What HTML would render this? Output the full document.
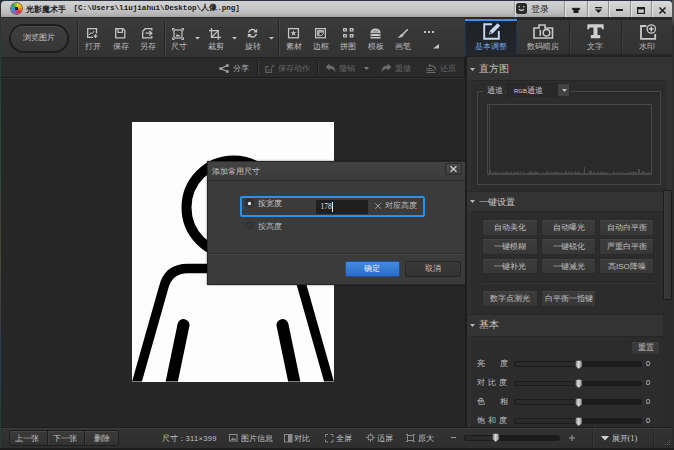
<!DOCTYPE html>
<html><head><meta charset="utf-8">
<style>
*{margin:0;padding:0;box-sizing:border-box}
html,body{width:674px;height:450px;overflow:hidden;background:#2a3440}
body{position:relative;font-family:"Liberation Sans",sans-serif}
.a{position:absolute}
.t{position:absolute;white-space:nowrap;line-height:1;font-family:"Liberation Sans",sans-serif;font-size:8px;color:#b4b4b4}
.c{text-align:center}
svg{position:absolute;overflow:visible}
.chk{background-color:#292929;background-image:linear-gradient(45deg,#242424 25%,transparent 25%,transparent 75%,#242424 75%),linear-gradient(45deg,#242424 25%,transparent 25%,transparent 75%,#242424 75%);background-size:4px 4px;background-position:0 0,2px 2px}
.sepd{position:absolute;width:1px;background:#262626;box-shadow:1px 0 0 #444}
.tb{position:absolute;top:42.4px;width:40px;text-align:center;font-size:8.4px;color:#bdbdbd;line-height:1;white-space:nowrap}
.btn{position:absolute;background:linear-gradient(#3c3c3c,#373737);border:1px solid #2a2a2a;border-radius:2px;box-shadow:inset 0 1px 0 #444;color:#c0c0c0;font-size:8px;line-height:15px;text-align:center;white-space:nowrap}
.sl{position:absolute;height:5px;border-radius:3px;background:#1c1c1c;box-shadow:inset 0 1px 1px #111,0 1px 0 #3a3a3a}
.hd{position:absolute;width:8px;height:10px;border-radius:2px 2px 4px 4px;background:linear-gradient(90deg,#8a8a8a,#e8e8e8 45%,#a0a0a0);box-shadow:0 0 0 0.5px #333}
</style></head><body>
<svg style="left:0;top:0" width="0" height="0"><defs><linearGradient id="hg" x1="0" x2="1" y1="0" y2="0"><stop offset="0" stop-color="#7a7a7a"/><stop offset="0.45" stop-color="#d8d8d8"/><stop offset="1" stop-color="#8a8a8a"/></linearGradient></defs></svg>
<!-- desktop strips -->
<div class="a" style="left:0;top:0;width:2px;height:450px;background:linear-gradient(#2a3030,#2a4a34 30%,#4a4438 60%,#2a3a50 80%,#2a3a2a)"></div>
<div class="a" style="left:672px;top:0;width:2px;height:450px;background:linear-gradient(#555 0,#555 4%,#2e2e2e 6%,#2a2a2a)"></div>
<div class="a" style="left:0;top:448px;width:674px;height:2px;background:#1c1c1c"></div>

<!-- window base -->
<div class="a" style="left:1px;top:1px;width:671px;height:447px;background:#2e2e2e;border-radius:4px 4px 0 0"></div>

<!-- title bar -->
<div class="a" style="left:1px;top:1px;width:671px;height:17px;background:linear-gradient(#d2d2d2,#c6c6c6 50%,#b4b4b4 85%,#a2a2a2);border-radius:4px 4px 0 0;border-bottom:1px solid #2a2a2a"></div>
<div class="a" style="left:11px;top:3px;width:11px;height:11px;border-radius:50%;background:conic-gradient(from 20deg,#f6d21e 0deg,#f2a21c 60deg,#e23232 120deg,#a452c4 180deg,#3492e2 240deg,#2fb246 300deg,#f6d21e 360deg);box-shadow:0 0 0 0.7px #3a3a3a"></div>
<div class="a" style="left:15.3px;top:7.3px;width:2.4px;height:2.4px;border-radius:50%;background:#1a1a1a"></div>
<div class="t" style="left:26px;top:5.1px;font-size:8.4px;font-weight:bold;color:#1c1c1c">光影魔术手</div>
<div class="t" style="left:73.5px;top:5.1px;font-family:'Liberation Mono',monospace;font-size:7.6px;font-weight:bold;color:#1c1c1c">[C:\Users\liujiahui\Desktop\人像.png]</div>

<!-- login -->
<div class="a" style="left:514px;top:1px;width:1px;height:16px;background:#9c9c9c;box-shadow:1px 0 0 #e0e0e0"></div>
<div class="a" style="left:516px;top:3.3px;width:11px;height:11px;border-radius:2.5px;background:#2a2a2a"></div>
<svg style="left:516px;top:3.3px" width="11" height="11"><path d="M3 6.2 Q5.5 8.6 8 6.2" stroke="#cfcfcf" stroke-width="1.2" fill="none"/><rect x="2.6" y="3" width="1.3" height="1.3" fill="#cfcfcf"/><rect x="7.1" y="3" width="1.3" height="1.3" fill="#cfcfcf"/></svg>
<div class="t" style="left:530.5px;top:4.6px;font-size:9px;color:#222">登录</div>

<!-- window buttons -->
<div class="a" style="left:564px;top:1px;width:108px;height:16px;background:linear-gradient(#dadada,#c9c9c9 60%,#bebebe);border-radius:0 4px 0 0"></div>
<div class="a" style="left:564px;top:1px;width:1px;height:16px;background:#8e8e8e;box-shadow:1px 0 0 #e4e4e4"></div>
<div class="a" style="left:586.5px;top:1px;width:1px;height:16px;background:#8e8e8e;box-shadow:1px 0 0 #e4e4e4"></div>
<div class="a" style="left:608px;top:1px;width:1px;height:16px;background:#8e8e8e;box-shadow:1px 0 0 #e4e4e4"></div>
<div class="a" style="left:630px;top:1px;width:1px;height:16px;background:#8e8e8e;box-shadow:1px 0 0 #e4e4e4"></div>
<div class="a" style="left:651px;top:1px;width:1px;height:16px;background:#8e8e8e;box-shadow:1px 0 0 #e4e4e4"></div>
<svg style="left:571.3px;top:6.6px" width="10" height="6.5" viewBox="0 0 10 8" preserveAspectRatio="none"><path d="M0.5 2.2 L3 0.5 L4 1.4 L5 0.5 L6 1.4 L7 0.5 L9.5 2.2 L8.2 4 L7.5 3.5 L7.5 7.5 L2.5 7.5 L2.5 3.5 L1.8 4 Z" fill="#1e1e1e"/></svg>
<svg style="left:594.8px;top:6.8px" width="7" height="7"><rect x="0" y="0" width="7" height="1.3" fill="#1e1e1e"/><path d="M0 2.6 L7 2.6 L3.5 6 Z" fill="#1e1e1e"/></svg>
<div class="a" style="left:616px;top:9.2px;width:7px;height:1.6px;background:#1e1e1e"></div>
<svg style="left:637px;top:6.5px" width="8" height="7"><rect x="0.6" y="0.6" width="6.8" height="5.8" fill="none" stroke="#1e1e1e" stroke-width="1.2"/><rect x="0" y="0" width="8" height="2.4" fill="#1e1e1e"/></svg>
<svg style="left:659px;top:6.5px" width="7" height="7"><path d="M0.5 0.5 L6.5 6.5 M6.5 0.5 L0.5 6.5" stroke="#1e1e1e" stroke-width="1.6"/></svg>

<!-- toolbar -->
<div class="a" style="left:1px;top:18px;width:465px;height:40px;background:linear-gradient(#3b3b3b,#363636 50%,#333);border-bottom:1px solid #202020"></div>
<div class="a" style="left:9px;top:23.5px;width:60px;height:29px;border-radius:14.5px;background:#1d1d1d"></div>
<div class="a" style="left:11px;top:25.5px;width:56px;height:25px;border-radius:12.5px;background:linear-gradient(#3e3e3e,#363636);box-shadow:inset 0 1px 0 #4a4a4a"></div>
<div class="t c" style="left:9px;width:60px;top:34px;font-size:8px;color:#c8c8c8">浏览图片</div>
<div class="sepd" style="left:77px;top:20px;height:37px"></div>
<div class="sepd" style="left:163.5px;top:20px;height:37px"></div>
<div class="sepd" style="left:278px;top:20px;height:37px"></div>
<!-- toolbar icons -->
<svg style="left:87px;top:28px" width="11" height="10"><path d="M9.5 5.5 V0.7 H0.7 V9.3 H6" fill="none" stroke="#c4c4c4" stroke-width="1.3"/><path d="M2.2 7 L4 4.6 L5.2 5.8 L7.2 3" fill="none" stroke="#c4c4c4" stroke-width="1"/><path d="M8.5 6.2 V10 M6.6 8.1 H10.4" stroke="#c4c4c4" stroke-width="1.3"/></svg>
<svg style="left:115px;top:28px" width="10.5" height="10.5"><path d="M0.7 0.7 H8 L9.8 2.5 V9.8 H0.7 Z" fill="none" stroke="#c4c4c4" stroke-width="1.3"/><path d="M3 0.7 V4.4 H7.4 V0.7" fill="none" stroke="#c4c4c4" stroke-width="1.2"/></svg>
<svg style="left:142px;top:28px" width="11" height="10.5"><path d="M9.8 2.5 V0.7 H3.2 L0.7 3.2 V9.8 H9.8 V8" fill="none" stroke="#c4c4c4" stroke-width="1.3"/><path d="M3.5 5.2 H9.5 M7.3 3 L9.8 5.2 L7.3 7.4" fill="none" stroke="#c4c4c4" stroke-width="1.3"/></svg>
<svg style="left:172px;top:27.5px" width="12" height="12"><rect x="2" y="2" width="8" height="8" fill="none" stroke="#c4c4c4" stroke-width="1.2"/><path d="M0.5 0.5h2M0.5 0.5v2M11.5 0.5h-2M11.5 0.5v2M0.5 11.5h2M0.5 11.5v-2M11.5 11.5h-2M11.5 11.5v-2" stroke="#c4c4c4" stroke-width="1"/><path d="M3.5 8.5 L5 6 L6.2 7.3 L7 6.4 L8.5 8.5 Z" fill="#c4c4c4"/></svg>
<svg style="left:209px;top:27.5px" width="12" height="12"><path d="M2.5 0 V9.3 H12 M0 2.6 H9.3 V11.8" fill="none" stroke="#c4c4c4" stroke-width="1.3"/><path d="M2.5 9.3 L9.3 2.6" stroke="#c4c4c4" stroke-width="1.2"/></svg>
<svg style="left:246.5px;top:28px" width="11" height="10.5"><path d="M1.6 4.6 A4 4 0 0 1 8.8 3.2" fill="none" stroke="#c4c4c4" stroke-width="1.5"/><path d="M10.2 0.8 V4.6 H6.4 Z" fill="#c4c4c4"/><path d="M9.4 5.9 A4 4 0 0 1 2.2 7.3" fill="none" stroke="#c4c4c4" stroke-width="1.5"/><path d="M0.8 9.7 V5.9 H4.6 Z" fill="#c4c4c4"/></svg>
<svg style="left:288px;top:27.8px" width="11" height="10.5"><rect x="0.6" y="0.6" width="9.8" height="9.2" fill="none" stroke="#c4c4c4" stroke-width="1.3"/><path d="M5.5 2.2 L6.3 4.3 L8.4 4.3 L6.7 5.6 L7.4 7.8 L5.5 6.5 L3.6 7.8 L4.3 5.6 L2.6 4.3 L4.7 4.3 Z" fill="#c4c4c4"/></svg>
<svg style="left:314.6px;top:27.7px" width="11" height="10.5"><rect x="0.6" y="0.6" width="9.8" height="9.2" fill="none" stroke="#c4c4c4" stroke-width="1.2"/><path d="M2.6 2.6 H8.4 V5.6 L6.2 7.8 H2.6 Z" fill="none" stroke="#c4c4c4" stroke-width="1"/><path d="M3.2 3.2 H7.8 V4.4 H4.4 V7.2 H3.2 Z" fill="#c4c4c4"/></svg>
<svg style="left:342.8px;top:28.3px" width="11" height="10"><g fill="#c4c4c4"><rect x="0" y="0" width="4" height="3.6" rx="0.5"/><rect x="6.6" y="0" width="4" height="3.6" rx="0.5"/><rect x="0" y="6" width="4" height="3.6" rx="0.5"/><rect x="6.6" y="6" width="4" height="3.6" rx="0.5"/></g><g fill="#3a3a3a"><rect x="1.3" y="1.2" width="1.4" height="1.2"/><rect x="7.9" y="1.2" width="1.4" height="1.2"/><rect x="1.3" y="7.2" width="1.4" height="1.2"/><rect x="7.9" y="7.2" width="1.4" height="1.2"/></g></svg>
<svg style="left:369.8px;top:27.8px" width="11" height="10.6"><path d="M0.5 5 Q0.5 0.5 5.5 0.5 Q10.5 0.5 10.5 5 V10.4 H0.5 Z" fill="#c4c4c4"/><path d="M2.3 4.6 Q2.5 2 5.5 2 Q8.5 2 8.7 4.6 Z" fill="#9a9a9a"/><rect x="0.5" y="5.2" width="10" height="1.1" fill="#343434"/><rect x="2.5" y="6.3" width="6" height="1.3" fill="#dcdcdc"/><rect x="0.5" y="8" width="10" height="0.9" fill="#343434"/></svg>
<svg style="left:396.5px;top:28.8px" width="11" height="9"><path d="M10.3 0.8 L5.8 5.3" stroke="#c4c4c4" stroke-width="1.6" stroke-linecap="round"/><path d="M5.9 4.8 Q7.2 6.2 5.8 7.6 Q4.2 9 0.3 8.6 Q2 7.8 3 6.4 Q4.2 4.4 5.9 4.8Z" fill="#c4c4c4"/></svg>
<svg style="left:423.5px;top:30.5px" width="10" height="2"><rect x="0" y="0" width="2" height="2" fill="#c4c4c4"/><rect x="4" y="0" width="2" height="2" fill="#c4c4c4"/><rect x="8" y="0" width="2" height="2" fill="#c4c4c4"/></svg>
<svg style="left:432.5px;top:43.5px" width="6" height="4.5"><path d="M6 0 V4.5 H0 Z" fill="#c4c4c4"/></svg>
<svg style="left:195px;top:37px" width="5" height="2.5"><path d="M0 0 H5 L2.5 2.5 Z" fill="#c4c4c4"/></svg>
<svg style="left:231.8px;top:37px" width="5" height="2.5"><path d="M0 0 H5 L2.5 2.5 Z" fill="#c4c4c4"/></svg>
<svg style="left:268.8px;top:37px" width="5" height="2.5"><path d="M0 0 H5 L2.5 2.5 Z" fill="#c4c4c4"/></svg>
<!-- toolbar labels -->
<div class="tb" style="left:73px">打开</div>
<div class="tb" style="left:100.5px">保存</div>
<div class="tb" style="left:128px">另存</div>
<div class="tb" style="left:158.7px">尺寸</div>
<div class="tb" style="left:195.7px">裁剪</div>
<div class="tb" style="left:232.8px">旋转</div>
<div class="tb" style="left:273.8px">素材</div>
<div class="tb" style="left:301px">边框</div>
<div class="tb" style="left:328px">拼图</div>
<div class="tb" style="left:356px">模板</div>
<div class="tb" style="left:382.7px">画笔</div>
<!-- right tabs -->
<div class="a" style="left:465px;top:18px;width:207px;height:40px;background:#262626"></div>
<div class="a" style="left:517px;top:20px;width:155px;height:34px;background:linear-gradient(#373737,#323232)"></div>
<div class="a" style="left:568.5px;top:20px;width:1px;height:34px;background:#262626;box-shadow:1px 0 0 #3c3c3c"></div>
<div class="a" style="left:620.5px;top:20px;width:1px;height:34px;background:#262626;box-shadow:1px 0 0 #3c3c3c"></div>
<div class="a" style="left:465px;top:19px;width:52px;height:37px;background:linear-gradient(#1e2126,#23262c);border:1px solid #1f3150;border-top:none"></div>
<div class="a" style="left:465px;top:19px;width:52px;height:2px;background:#3e8ee6"></div>
<svg style="left:482.5px;top:22.5px" width="17" height="17"><path d="M9 1.2 H1.2 V15.8 H15.8 V8" fill="none" stroke="#c6d8f4" stroke-width="1.9"/><path d="M14.6 0.2 L17.2 2.8 L9.6 10.4 L5.8 11.6 L7 7.8 Z" fill="#c6d8f4"/><path d="M7.4 8.6 L6.6 10.8 L8.8 10 Z" fill="#3a4a66"/></svg>
<div class="t c" style="left:465px;width:52px;top:42.3px;font-size:8.4px;color:#72a4ea">基本调整</div>
<svg style="left:533px;top:23.5px" width="20.5" height="15"><path d="M1 4 H6 V1 H12 V4 H19.5 V14 H1 Z" fill="none" stroke="#c8c8c8" stroke-width="1.6"/><circle cx="13.5" cy="8.8" r="3.3" fill="none" stroke="#c8c8c8" stroke-width="1.5"/><rect x="6.5" y="5.8" width="1.6" height="6" fill="#c8c8c8"/></svg>
<div class="t c" style="left:517px;width:52px;top:42.3px;font-size:8.4px;color:#bcbcbc">数码暗房</div>
<svg style="left:587px;top:24px" width="17" height="14.5"><path d="M0.5 0.3 H16.5 L16.8 5.3 L15.2 5.3 L14.3 3.6 H10.5 V11 H13.2 V14.2 H3.8 V11 H6.5 V3.6 H2.7 L1.8 5.3 H0.2 Z" fill="#cfcfcf"/></svg>
<div class="t c" style="left:569px;width:52px;top:42.1px;font-size:8.4px;color:#bcbcbc">文字</div>
<svg style="left:639.5px;top:24.5px" width="17" height="15"><path d="M6.5 1 H1 V13.8 H15.2 V9" fill="none" stroke="#c8c8c8" stroke-width="1.8"/><circle cx="11.3" cy="4" r="4.2" fill="#333" stroke="#c8c8c8" stroke-width="1.3"/><path d="M11.3 1.6 V6.4 M8.9 4 H13.7" stroke="#d0d0d0" stroke-width="1.4"/></svg>
<div class="t c" style="left:621px;width:52px;top:42.1px;font-size:8.4px;color:#bcbcbc">水印</div>

<!-- secondary bar -->
<div class="a chk" style="left:1px;top:58px;width:464px;height:20px;border-bottom:1px solid #1c1c1c;border-right:1px solid #1c1c1c;box-shadow:inset 0 0 0 100px rgba(60,60,60,0.18)"></div>
<svg style="left:219px;top:63.5px" width="10" height="9"><path d="M8.2 1.5 L1.8 4.5 L8.2 7.5" fill="none" stroke="#a0a0a0" stroke-width="1.2"/><circle cx="8.3" cy="1.6" r="1.5" fill="#a0a0a0"/><circle cx="1.7" cy="4.5" r="1.5" fill="#a0a0a0"/><circle cx="8.3" cy="7.4" r="1.5" fill="#a0a0a0"/></svg>
<div class="t" style="left:233px;top:64.5px;font-size:8px;color:#b4b4b4">分享</div>
<div class="a" style="left:257px;top:61px;width:1px;height:14px;background:#1c1c1c;box-shadow:1px 0 0 #3a3a3a"></div>
<svg style="left:264.5px;top:63.5px" width="10" height="9"><path d="M6.5 3.5 V8.3 H0.7 V2.5 H4" fill="none" stroke="#5e5e5e" stroke-width="1.2"/><path d="M2.5 6 H5 M7 0.5 L9.5 3 M9.5 0.5 L7 3" stroke="#5e5e5e" stroke-width="1"/></svg>
<div class="t" style="left:277.5px;top:64.5px;font-size:8px;color:#646464">保存动作</div>
<div class="a" style="left:316.5px;top:61px;width:1px;height:14px;background:#1c1c1c;box-shadow:1px 0 0 #3a3a3a"></div>
<svg style="left:325px;top:63px" width="11" height="10"><path d="M0.5 4 L4.5 0.5 V2.6 Q10.5 2.6 10.5 9.5 Q8.5 5.6 4.5 5.8 V7.6 Z" fill="#6a6a6a"/></svg>
<div class="t" style="left:339px;top:64.5px;font-size:8px;color:#646464">撤销</div>
<svg style="left:364px;top:67px" width="5" height="3"><path d="M0 0 H5 L2.5 3 Z" fill="#7a7a7a"/></svg>
<svg style="left:381px;top:63px" width="11" height="10"><path d="M10.5 4 L6.5 0.5 V2.6 Q0.5 2.6 0.5 9.5 Q2.5 5.6 6.5 5.8 V7.6 Z" fill="#6a6a6a"/></svg>
<div class="t" style="left:395px;top:64.5px;font-size:8px;color:#646464">重做</div>
<svg style="left:426px;top:62.5px" width="10" height="11"><path d="M3 0.5 L5.5 2.5 L3 4.5 Z" fill="#6a6a6a"/><path d="M4 2.5 Q9.5 2.5 9.5 7" fill="none" stroke="#6a6a6a" stroke-width="1.2"/><path d="M0.5 5.5 H6 M0.5 7.5 H8 M0.5 9.5 H9.5" stroke="#6a6a6a" stroke-width="1.1"/></svg>
<div class="t" style="left:439.5px;top:64.5px;font-size:8px;color:#646464">还原</div>
<!-- canvas -->
<div class="a chk" style="left:1px;top:78.5px;width:464px;height:348.5px"></div>
<div class="a" style="left:132px;top:122px;width:202px;height:259.5px;background:#fdfdfd"></div>
<svg style="left:132px;top:122px" width="202" height="259.5" viewBox="132 122 202 259.5">
<defs><clipPath id="ic"><rect x="132" y="122" width="202" height="259.5"/></clipPath></defs>
<g clip-path="url(#ic)" fill="none" stroke="#000">
<circle cx="233.5" cy="207.5" r="47" stroke-width="10"/>
<path d="M136 385 L163.5 288 Q168 268.5 188 268.5 H278 Q298 268.5 302.5 288 L330 385" stroke-width="9.5" stroke-linejoin="round"/>
<path d="M183.5 325 L170 390 M282.5 325 L296 390" stroke-width="12" stroke-linecap="round"/>
</g></svg>

<!-- dialog -->
<div class="a" style="left:206.5px;top:160.5px;width:261px;height:124px;background:#3b3b3b;border:1px solid #262626;box-shadow:0 0 2px rgba(0,0,0,.5)"></div>
<div class="a" style="left:207.5px;top:161.5px;width:259px;height:19.5px;background:linear-gradient(#424242,#3c3c3c);border-bottom:1px solid #2c2c2c"></div>
<div class="t" style="left:212px;top:166.5px;font-size:8.3px;color:#c4c4c4">添加常用尺寸</div>
<div class="a" style="left:445px;top:163px;width:17px;height:12px;border-radius:2px;background:linear-gradient(#4a4a4a,#3c3c3c);border:1px solid #2a2a2a"></div>
<svg style="left:450px;top:166px" width="7" height="6"><path d="M0.5 0.3 L6.5 5.7 M6.5 0.3 L0.5 5.7" stroke="#d0d0d0" stroke-width="1.3"/></svg>
<div class="a" style="left:240px;top:196.2px;width:184.5px;height:20.4px;border:2px solid #2a90ec;border-radius:2px"></div>
<div class="a" style="left:245.2px;top:199.1px;width:9px;height:9px;border-radius:50%;background:#323232;box-shadow:inset 0 0.6px 0 #262626,0 0.6px 0 #454545"></div>
<div class="a" style="left:248.2px;top:202.1px;width:3px;height:3px;border-radius:50%;background:#e6e6e6;box-shadow:0 0 1px #fff"></div>
<div class="t" style="left:257.5px;top:199.3px;font-size:8.3px;color:#cacaca">按宽度</div>
<div class="a" style="left:315.5px;top:199.5px;width:52px;height:14.7px;background:#1f1f1f"></div>
<div class="t" style="left:320.5px;top:203px;font-size:7.4px;color:#e0e0e0;font-family:'Liberation Serif',serif">178</div>
<div class="a" style="left:332.3px;top:201.5px;width:1px;height:10px;background:#f0f0f0"></div>
<svg style="left:374.5px;top:202.5px" width="6" height="6"><path d="M0.3 0.3 L5.7 5.7 M5.7 0.3 L0.3 5.7" stroke="#9a9a9a" stroke-width="1"/></svg>
<div class="t" style="left:385px;top:201.5px;font-size:8px;color:#c0c0c0">对应高度</div>
<div class="a" style="left:245.2px;top:222.1px;width:9px;height:9px;border-radius:50%;background:#363636;box-shadow:inset 0 0.6px 0 #262626,0 0.6px 0 #454545"></div>
<div class="t" style="left:257.5px;top:222.3px;font-size:8.3px;color:#bcbcbc">按高度</div>
<div class="a" style="left:207.5px;top:252.5px;width:259px;height:1px;background:#2e2e2e;box-shadow:0 1px 0 #424242"></div>
<div class="a" style="left:345px;top:260.5px;width:54.6px;height:16.7px;border-radius:2px;background:linear-gradient(#418be0,#2b6bc8);border:1px solid #1e4e94;color:#e6eefa;font-size:8px;line-height:14.5px;text-align:center">确定</div>
<div class="a" style="left:405px;top:260.5px;width:55.5px;height:16.7px;border-radius:2px;background:linear-gradient(#393939,#333);border:1px solid #262626;color:#c0c0c0;font-size:8px;line-height:14.5px;text-align:center">取消</div>
<!-- right panel -->
<div class="a" style="left:465px;top:55.5px;width:207px;height:371.5px;background:#303030"></div>
<div class="a" style="left:464.5px;top:55.5px;width:2px;height:371.5px;background:#1e1e1e"></div>
<div class="a" style="left:466.5px;top:55px;width:205.5px;height:2px;background:#242424"></div>
<!-- header 直方图 -->
<div class="a" style="left:466.5px;top:57px;width:205.5px;height:23px;background:#333"></div>
<svg style="left:470px;top:68px" width="5" height="3"><path d="M0 0 H5 L2.5 3 Z" fill="#b8b8b8"/></svg>
<div class="t" style="left:479px;top:64.3px;font-size:10px;color:#c8c8c8">直方图</div>
<div class="a" style="left:471px;top:80px;width:196px;height:110.5px;background:#2c2c2c;border-top:1px solid #262626"></div>
<div class="a" style="left:477.3px;top:91px;width:183.7px;height:93.5px;border:1px solid #464646"></div>
<div class="a" style="left:483px;top:85px;width:22px;height:12px;background:#2c2c2c"></div>
<div class="t" style="left:486.5px;top:87px;font-size:8px;color:#c4c4c4">通道</div>
<div class="a" style="left:507px;top:82.8px;width:63.4px;height:14.5px;background:#292929;border:1px solid #262626"></div>
<div class="a" style="left:557.4px;top:82.8px;width:13px;height:14.5px;background:#424242;border:1px solid #2a2a2a"></div>
<svg style="left:561.5px;top:89px" width="5" height="3"><path d="M0 0 H5 L2.5 3 Z" fill="#c0c0c0"/></svg>
<div class="t" style="left:514px;top:86.5px;font-size:8px;color:#d0d0d0"><span style="font-size:6px">RGB</span>通道</div>
<div class="a" style="left:487.3px;top:104px;width:165px;height:71px;border:1px solid #484848;background:#2a2a2a"></div>
<svg style="left:488px;top:104px" width="164" height="70"><path d="M0 70 L0 69 L1 69 L1 66 L2 66 L2 66 L3 66 L3 69 L4 69 L4 69 L5 69 L5 68 L6 68 L6 68.5 L7 68.5 L7 67.5 L8 67.5 L8 68 L9 68 L9 69.5 L10 69.5 L10 68 L11 68 L11 69.5 L12 69.5 L12 68.5 L13 68.5 L13 69 L14 69 L14 68 L15 68 L15 69 L16 69 L16 69 L17 69 L17 67.5 L18 67.5 L18 68.5 L19 68.5 L19 68 L20 68 L20 68 L21 68 L21 68.5 L22 68.5 L22 68.5 L23 68.5 L23 67.5 L24 67.5 L24 69 L25 69 L25 69 L26 69 L26 67.5 L27 67.5 L27 69 L28 69 L28 68 L29 68 L29 68.5 L30 68.5 L30 67.5 L31 67.5 L31 69.5 L32 69.5 L32 67.5 L33 67.5 L33 69.5 L34 69.5 L34 69 L35 69 L35 68 L36 68 L36 69.5 L37 69.5 L37 69 L38 69 L38 69.5 L39 69.5 L39 69 L40 69 L40 68.5 L41 68.5 L41 68 L42 68 L42 67.5 L43 67.5 L43 68.5 L44 68.5 L44 67.5 L45 67.5 L45 68.5 L46 68.5 L46 68.5 L47 68.5 L47 67.5 L48 67.5 L48 68 L49 68 L49 68.5 L50 68.5 L50 69 L51 69 L51 69 L52 69 L52 69.5 L53 69.5 L53 69.5 L54 69.5 L54 69 L55 69 L55 68.5 L56 68.5 L56 69 L57 69 L57 69 L58 69 L58 67.5 L59 67.5 L59 68.5 L60 68.5 L60 67.5 L61 67.5 L61 69 L62 69 L62 68.5 L63 68.5 L63 68 L64 68 L64 68.5 L65 68.5 L65 68 L66 68 L66 69 L67 69 L67 68 L68 68 L68 68 L69 68 L69 68.5 L70 68.5 L70 68 L71 68 L71 69 L72 69 L72 69 L73 69 L73 67.5 L74 67.5 L74 69.5 L75 69.5 L75 69 L76 69 L76 68 L77 68 L77 67.5 L78 67.5 L78 67.5 L79 67.5 L79 69 L80 69 L80 67.5 L81 67.5 L81 69 L82 69 L82 68 L83 68 L83 68 L84 68 L84 68 L85 68 L85 69.5 L86 69.5 L86 67.5 L87 67.5 L87 67.5 L88 67.5 L88 69 L89 69 L89 67.5 L90 67.5 L90 68 L91 68 L91 69 L92 69 L92 69 L93 69 L93 69.5 L94 69.5 L94 69.5 L95 69.5 L95 68.5 L96 68.5 L96 63 L97 63 L97 68.5 L98 68.5 L98 69.5 L99 69.5 L99 69 L100 69 L100 69.5 L101 69.5 L101 67 L102 67 L102 67 L103 67 L103 67 L104 67 L104 69 L105 69 L105 68.5 L106 68.5 L106 68.5 L107 68.5 L107 69.5 L108 69.5 L108 69.5 L109 69.5 L109 68 L110 68 L110 68 L111 68 L111 69.5 L112 69.5 L112 68.5 L113 68.5 L113 67.5 L114 67.5 L114 68 L115 68 L115 69 L116 69 L116 68 L117 68 L117 69 L118 69 L118 68 L119 68 L119 69 L120 69 L120 69.5 L121 69.5 L121 69 L122 69 L122 69.5 L123 69.5 L123 69.5 L124 69.5 L124 69.5 L125 69.5 L125 68 L126 68 L126 68 L127 68 L127 69.5 L128 69.5 L128 69 L129 69 L129 68.5 L130 68.5 L130 69 L131 69 L131 68 L132 68 L132 69 L133 69 L133 69 L134 69 L134 67.5 L135 67.5 L135 69.5 L136 69.5 L136 69 L137 69 L137 69 L138 69 L138 69 L139 69 L139 69 L140 69 L140 68.5 L141 68.5 L141 68.5 L142 68.5 L142 68.5 L143 68.5 L143 68 L144 68 L144 68.5 L145 68.5 L145 67.5 L146 67.5 L146 68 L147 68 L147 67.5 L148 67.5 L148 68 L149 68 L149 69.5 L150 69.5 L150 65 L151 65 L151 65 L152 65 L152 69 L153 69 L153 68.5 L154 68.5 L154 67.5 L155 67.5 L155 67.5 L156 67.5 L156 67.5 L157 67.5 L157 69 L158 69 L158 69 L159 69 L159 68.5 L160 68.5 L160 69 L161 69 L161 68 L162 68 L162 69 L163 69 L163 68 L164 68 L164 70 Z" fill="#4a4a4a"/><path d="M1.5 70 V2" stroke="#444" stroke-width="1"/></svg>

<!-- header 一键设置 -->
<div class="a" style="left:466.5px;top:190.5px;width:197px;height:20.5px;background:#333;border-top:1px solid #282828"></div>
<svg style="left:470px;top:200px" width="5" height="3"><path d="M0 0 H5 L2.5 3 Z" fill="#b8b8b8"/></svg>
<div class="t" style="left:479px;top:196.5px;font-size:9.4px;color:#c8c8c8">一键设置</div>
<div class="a" style="left:471px;top:211px;width:192px;height:103px;background:#2c2c2c;border-top:1px solid #262626"></div>
<div class="btn" style="left:482.4px;top:218.9px;width:55.6px;height:16.7px">自动美化</div>
<div class="btn" style="left:541px;top:218.9px;width:55px;height:16.7px">自动曝光</div>
<div class="btn" style="left:599.3px;top:218.9px;width:55.1px;height:16.7px">自动白平衡</div>
<div class="btn" style="left:482.4px;top:238.2px;width:55.6px;height:16.7px">一键模糊</div>
<div class="btn" style="left:541px;top:238.2px;width:55px;height:16.7px">一键锐化</div>
<div class="btn" style="left:599.3px;top:238.2px;width:55.1px;height:16.7px">严重白平衡</div>
<div class="btn" style="left:482.4px;top:257.8px;width:55.6px;height:16.7px">一键补光</div>
<div class="btn" style="left:541px;top:257.8px;width:55px;height:16.7px">一键减光</div>
<div class="btn" style="left:599.3px;top:257.8px;width:55.1px;height:16.7px">高ISO降噪</div>
<div class="a" style="left:482px;top:282px;width:175px;height:1px;background:#262626;box-shadow:0 1px 0 #363636"></div>
<div class="btn" style="left:482.4px;top:290px;width:55.6px;height:16.7px">数字点测光</div>
<div class="btn" style="left:541px;top:290px;width:55px;height:16.7px">白平衡一指键</div>

<!-- header 基本 -->
<div class="a" style="left:466.5px;top:314px;width:197px;height:21.5px;background:#333;border-top:1px solid #282828"></div>
<svg style="left:470px;top:323.5px" width="5" height="3"><path d="M0 0 H5 L2.5 3 Z" fill="#b8b8b8"/></svg>
<div class="t" style="left:479px;top:320.3px;font-size:10px;color:#c8c8c8">基本</div>
<div class="a" style="left:471px;top:335.5px;width:192px;height:91.5px;background:#2c2c2c;border-top:1px solid #262626"></div>
<div class="btn" style="left:631px;top:341px;width:29px;height:14px;line-height:12.5px">重置</div>
<div class="t" style="left:477px;top:358.8px;font-size:8.3px;color:#c0c0c0;letter-spacing:0">亮<span style="display:inline-block;width:14.6px"></span>度</div>
<div class="t" style="left:477px;top:378px;font-size:8.3px;color:#c0c0c0;letter-spacing:3px">对比度</div>
<div class="t" style="left:477px;top:397px;font-size:8.3px;color:#c0c0c0">色<span style="display:inline-block;width:14.6px"></span>相</div>
<div class="t" style="left:477px;top:416px;font-size:8.3px;color:#c0c0c0;letter-spacing:3px">饱和度</div>
<div class="t" style="left:646px;top:360px;font-size:7.5px;color:#c8c8c8">0</div>
<div class="t" style="left:646px;top:379.3px;font-size:7.5px;color:#c8c8c8">0</div>
<div class="t" style="left:646px;top:398.3px;font-size:7.5px;color:#c8c8c8">0</div>
<div class="t" style="left:646px;top:417.2px;font-size:7.5px;color:#c8c8c8">0</div>

<div class="a" style="left:513.5px;top:361.2px;width:64.5px;height:5.6px;border-radius:3px 0 0 3px;background:#2a2a2a;border:1px solid #1c1c1c;border-right:none"></div>
<div class="a" style="left:578.0px;top:361.2px;width:64.2px;height:5.6px;border-radius:0 3px 3px 0;background:#1b1b1b"></div>
<svg style="left:574.5px;top:359.5px" width="7.5" height="9.5"><path d="M0.5 2 Q0.5 0.5 2 0.5 H5.5 Q7 0.5 7 2 V6.5 L3.75 9 L0.5 6.5 Z" fill="url(#hg)" stroke="#3a3a3a" stroke-width="0.6"/></svg>
<div class="a" style="left:513.5px;top:380.5px;width:64.5px;height:5.6px;border-radius:3px 0 0 3px;background:#2a2a2a;border:1px solid #1c1c1c;border-right:none"></div>
<div class="a" style="left:578.0px;top:380.5px;width:64.2px;height:5.6px;border-radius:0 3px 3px 0;background:#1b1b1b"></div>
<svg style="left:574.5px;top:378.8px" width="7.5" height="9.5"><path d="M0.5 2 Q0.5 0.5 2 0.5 H5.5 Q7 0.5 7 2 V6.5 L3.75 9 L0.5 6.5 Z" fill="url(#hg)" stroke="#3a3a3a" stroke-width="0.6"/></svg>
<div class="a" style="left:513.5px;top:399.4px;width:64.5px;height:5.6px;border-radius:3px 0 0 3px;background:#2a2a2a;border:1px solid #1c1c1c;border-right:none"></div>
<div class="a" style="left:578.0px;top:399.4px;width:64.2px;height:5.6px;border-radius:0 3px 3px 0;background:#1b1b1b"></div>
<svg style="left:574.5px;top:397.7px" width="7.5" height="9.5"><path d="M0.5 2 Q0.5 0.5 2 0.5 H5.5 Q7 0.5 7 2 V6.5 L3.75 9 L0.5 6.5 Z" fill="url(#hg)" stroke="#3a3a3a" stroke-width="0.6"/></svg>
<div class="a" style="left:513.5px;top:418.3px;width:64.5px;height:5.6px;border-radius:3px 0 0 3px;background:#2a2a2a;border:1px solid #1c1c1c;border-right:none"></div>
<div class="a" style="left:578.0px;top:418.3px;width:64.2px;height:5.6px;border-radius:0 3px 3px 0;background:#1b1b1b"></div>
<svg style="left:574.5px;top:416.6px" width="7.5" height="9.5"><path d="M0.5 2 Q0.5 0.5 2 0.5 H5.5 Q7 0.5 7 2 V6.5 L3.75 9 L0.5 6.5 Z" fill="url(#hg)" stroke="#3a3a3a" stroke-width="0.6"/></svg>
<!-- scrollbar -->
<div class="a" style="left:663px;top:190.5px;width:9px;height:236.5px;background:#2a2a2a"></div>
<div class="a" style="left:663.3px;top:190px;width:8.4px;height:110px;background:linear-gradient(90deg,#3a3a3a,#333);border:1px solid #1c1c1c;border-radius:1px"></div>
<!-- bottom bar -->
<div class="a" style="left:1px;top:426.5px;width:671px;height:21.5px;background:linear-gradient(#333,#2e2e2e);border-top:1px solid #1e1e1e;box-shadow:inset 0 1px 0 #3c3c3c"></div>
<div class="a" style="left:8.7px;top:430px;width:110.5px;height:16.2px;border-radius:3px;background:linear-gradient(#3a3a3a,#323232);border:1px solid #1e1e1e;box-shadow:inset 0 1px 0 #464646"></div>
<div class="a" style="left:47px;top:431px;width:1px;height:14.2px;background:#1e1e1e;box-shadow:1px 0 0 #404040"></div>
<div class="a" style="left:84.3px;top:431px;width:1px;height:14.2px;background:#1e1e1e;box-shadow:1px 0 0 #404040"></div>
<div class="t" style="left:15px;top:434.6px;font-size:8px;color:#c0c0c0">上一张</div>
<div class="t" style="left:52.5px;top:434.6px;font-size:8px;color:#c0c0c0">下一张</div>
<div class="t" style="left:93.5px;top:434.6px;font-size:8px;color:#c0c0c0">删除</div>
<div class="t" style="left:161.5px;top:434.6px;font-size:8px;color:#c0c0c0">尺寸：<span style="font-size:7.6px;letter-spacing:0.3px">311×399</span></div>
<svg style="left:229px;top:434px" width="8.5" height="7.5"><rect x="0.5" y="0.5" width="7.5" height="6.5" fill="none" stroke="#8a8a8a" stroke-width="1"/><path d="M1.5 6 L3.5 3.5 L5 5 L6 4 L7 6 Z" fill="#8a8a8a"/></svg>
<div class="t" style="left:241px;top:434.6px;font-size:8px;color:#c0c0c0">图片信息</div>
<svg style="left:284px;top:433.5px" width="8.5" height="8.5"><rect x="0.5" y="0.5" width="7.5" height="7.5" fill="none" stroke="#8a8a8a" stroke-width="1"/><rect x="4" y="0.5" width="4" height="7.5" fill="#8a8a8a"/></svg>
<div class="t" style="left:294px;top:434.6px;font-size:8px;color:#c0c0c0">对比</div>
<svg style="left:325px;top:433.5px" width="8.5" height="8.5"><path d="M0.5 3 V0.5 H3 M5.5 0.5 H8 V3 M8 5.5 V8 H5.5 M3 8 H0.5 V5.5" fill="none" stroke="#8a8a8a" stroke-width="1"/></svg>
<div class="t" style="left:335.5px;top:434.6px;font-size:8px;color:#c0c0c0">全屏</div>
<svg style="left:366px;top:433px" width="9" height="9"><path d="M4.5 0 V2.5 M4.5 6.5 V9 M0 4.5 H2.5 M6.5 4.5 H9" stroke="#8a8a8a" stroke-width="1"/><rect x="2.3" y="2.3" width="4.4" height="4.4" fill="none" stroke="#8a8a8a" stroke-width="1"/></svg>
<div class="t" style="left:376.5px;top:434.6px;font-size:8px;color:#c0c0c0">适屏</div>
<svg style="left:406px;top:434px" width="9" height="8"><path d="M0 0.5 H2 M7 0.5 H9 M0 7.5 H2 M7 7.5 H9" stroke="#8a8a8a" stroke-width="1"/><rect x="1.5" y="1.5" width="6" height="5" fill="none" stroke="#8a8a8a" stroke-width="1"/></svg>
<div class="t" style="left:417.5px;top:434.6px;font-size:8px;color:#c0c0c0">原大</div>
<div class="a" style="left:451px;top:437.3px;width:5px;height:1px;background:#9a9a9a"></div>
<div class="a" style="left:464.4px;top:435.0px;width:31.1px;height:5.6px;border-radius:3px 0 0 3px;background:#2a2a2a;border:1px solid #1c1c1c;border-right:none"></div>
<div class="a" style="left:495.5px;top:435.0px;width:64.5px;height:5.6px;border-radius:0 3px 3px 0;background:#1b1b1b"></div>
<svg style="left:492px;top:433.3px" width="7.5" height="9.5"><path d="M0.5 2 Q0.5 0.5 2 0.5 H5.5 Q7 0.5 7 2 V6.5 L3.75 9 L0.5 6.5 Z" fill="url(#hg)" stroke="#3a3a3a" stroke-width="0.6"/></svg>
<svg style="left:568.5px;top:435px" width="6" height="6"><path d="M3 0 V6 M0 3 H6" stroke="#9a9a9a" stroke-width="1"/></svg>
<div class="a" style="left:591.5px;top:429px;width:1px;height:17px;background:#262626;box-shadow:1px 0 0 #3a3a3a"></div>
<svg style="left:600.6px;top:435.8px" width="8" height="4.5"><path d="M0 0 H8 L4 4.5 Z" fill="#d0d0d0"/></svg>
<div class="t" style="left:611.5px;top:433.5px;font-size:8.3px;color:#c8c8c8">展开<span style="font-family:'Liberation Serif',serif;font-size:8.5px">(1)</span></div>
<div class="a" style="left:653px;top:429px;width:1px;height:17px;background:#262626;box-shadow:1px 0 0 #3a3a3a"></div>
<svg style="left:662px;top:440px" width="9" height="7"><g fill="#555"><rect x="7" y="0" width="1" height="1"/><rect x="5" y="2" width="1" height="1"/><rect x="7" y="2" width="1" height="1"/><rect x="3" y="4" width="1" height="1"/><rect x="5" y="4" width="1" height="1"/><rect x="7" y="4" width="1" height="1"/></g></svg>
</body></html>
